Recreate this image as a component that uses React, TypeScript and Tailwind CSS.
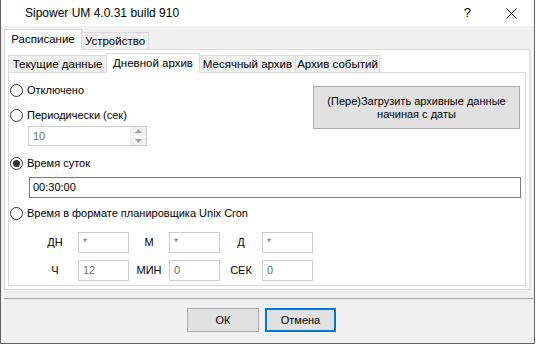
function Radio({ checked }: { checked?: boolean }) {
  return (
    <span className="w-[13px] h-[13px] rounded-full border border-[#333333] bg-white flex items-center justify-center shrink-0">
      {checked && <span className="w-[7px] h-[7px] rounded-full bg-[#333333]" />}
    </span>
  );
}

function Tab({ label, selected, w, h }: { label: string; selected?: boolean; w: string; h?: string }) {
  if (selected) {
    return (
      <div className={`${w} ${h ?? "h-[20px]"} -ml-px first:ml-0 relative z-10 bg-white border border-b-0 border-[#d9d9d9] flex items-center justify-center whitespace-nowrap`}>
        {label}
      </div>
    );
  }
  return (
    <div className={`${w} h-[17px] mb-px -ml-px first:ml-0 bg-[#f0f0f0] border border-b-0 border-[#d9d9d9] flex items-center justify-center pt-px whitespace-nowrap`}>
      {label}
    </div>
  );
}

function CronBox({ value }: { value: string }) {
  return (
    <div className="w-[51px] h-[21px] border border-[#cccccc] bg-white text-[#6d6d6d] pl-[4px] flex items-center">
      {value}
    </div>
  );
}

export default function App() {
  const ui = "font-['Liberation_Sans',Arial,sans-serif] text-[11px] text-black";
  return (
    <div className={`w-[535px] h-[344px] border-x border-b border-[#5f5f5f] bg-[#f0f0f0] flex flex-col ${ui}`}>
      {/* title bar */}
      <div className="h-[26px] bg-white flex items-center shrink-0">
        <span className="ml-[24px] text-[12px] flex-1">Sipower UM 4.0.31 build 910</span>
        <span className="text-[13px] mr-[35px]">?</span>
        <svg width="11" height="11" viewBox="0 0 11 11" className="mr-[17px]">
          <path d="M0.5 0.5 L10.5 10.5 M10.5 0.5 L0.5 10.5" stroke="#000" strokeWidth="1" />
        </svg>
      </div>

      <div className="pt-[3px] flex flex-col">
        {/* outer tabs */}
        <div className="ml-[3px] flex items-end -mb-px relative z-10 text-[11.5px]">
          <Tab label="Расписание" selected w="w-[78px]" h="h-[21px]" />
          <Tab label="Устройство" w="w-[68px]" />
        </div>
        <div className="ml-[3px] w-[526px] h-[241px] border border-[#d9d9d9] bg-white p-[3px] flex flex-col">
          {/* inner tabs */}
          <div className="flex items-end -mb-px relative z-10 text-[11.5px]">
            <Tab label="Текущие данные" w="w-[99px]" />
            <Tab label="Дневной архив" selected w="w-[94px]" />
            <Tab label="Месячный архив" w="w-[97px]" />
            <Tab label="Архив событий" w="w-[85px]" />
          </div>
          <div className="flex-1 border border-[#d9d9d9] bg-white flex flex-col">
            <div className="flex">
              <div className="flex-1 flex flex-col pt-[7px]">
                <div className="h-[20px] flex items-center gap-[4px] ml-px">
                  <Radio />
                  <span>Отключено</span>
                </div>
                <div className="h-[20px] mt-[5px] flex items-center gap-[4px] ml-px">
                  <Radio />
                  <span>Периодически (сек)</span>
                </div>
                <div className="ml-[19px] mt-px w-[119px] h-[20px] border border-[#cccccc] flex items-center">
                  <span className="flex-1 pl-[4px] text-[#6d6d6d]">10</span>
                  <div className="w-[16px] h-full flex flex-col border-l border-[#f0f0f0]">
                    <div className="flex-1 flex items-center justify-center bg-[#f0f0f0] border-b border-white">
                      <svg width="7" height="4" viewBox="0 0 7 4"><path d="M3.5 0 L7 4 L0 4 Z" fill="#a0a0a0" /></svg>
                    </div>
                    <div className="flex-1 flex items-center justify-center bg-[#f0f0f0]">
                      <svg width="7" height="4" viewBox="0 0 7 4"><path d="M0 0 L7 0 L3.5 4 Z" fill="#a0a0a0" /></svg>
                    </div>
                  </div>
                </div>
              </div>
              <div className="mt-[13px] mr-[5px] w-[207px] h-[43px] bg-[#e1e1e1] border border-[#adadad] flex items-center justify-center text-center leading-[13px]">
                (Пере)Загрузить архивные данные
                <br />
                начиная с даты
              </div>
            </div>

            <div className="h-[20px] mt-[7px] flex items-center gap-[4px] ml-px">
              <Radio checked />
              <span>Время суток</span>
            </div>
            <div className="ml-[20px] mt-[4px] w-[492px] h-[21px] border border-[#7a7a7a] pl-[3px] flex items-center">
              00:30:00
            </div>
            <div className="h-[20px] mt-[5px] flex items-center gap-[4px] ml-px">
              <Radio />
              <span>Время в формате планировщика Unix Cron</span>
            </div>

            <div className="mt-[9px] flex items-center">
              <span className="ml-[31px] w-[30px] text-center">ДН</span>
              <span className="w-[8px]" />
              <CronBox value="*" />
              <span className="w-[40px] text-center">М</span>
              <CronBox value="*" />
              <span className="w-[42px] text-center">Д</span>
              <CronBox value="*" />
            </div>
            <div className="mt-[7px] flex items-center">
              <span className="ml-[31px] w-[30px] text-center">Ч</span>
              <span className="w-[8px]" />
              <CronBox value="12" />
              <span className="w-[40px] text-center">МИН</span>
              <CronBox value="0" />
              <span className="w-[42px] text-center">СЕК</span>
              <CronBox value="0" />
            </div>
          </div>
        </div>

        {/* separator */}
        <div className="ml-[3px] mt-[8px] w-[529px] h-px bg-[#a0a0a0]" />

        {/* buttons */}
        <div className="mt-[9px] flex pl-[186px] gap-[6px]">
          <div className="w-[72px] h-[24px] bg-[#e1e1e1] border border-[#adadad] flex items-center justify-center">
            ОК
          </div>
          <div className="w-[71px] h-[24px] bg-[#e1e1e1] border-2 border-[#0078d7] flex items-center justify-center">
            Отмена
          </div>
        </div>
      </div>
    </div>
  );
}
